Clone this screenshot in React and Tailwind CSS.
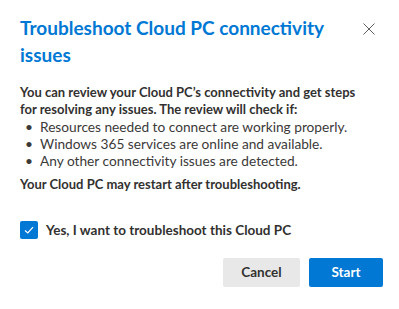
export default function App() {
  const font = { fontFamily: 'Lato, "Noto Sans", sans-serif' };
  return (
    <div className="w-[399px] h-[309px] bg-white relative overflow-hidden" style={font}>
      <div className="pl-5 pr-4 pt-[14px]">
        <div className="flex items-start justify-between">
          <h1 className="flex-1 pr-[20px] text-[19px] leading-[27px] font-bold text-[#0078d4]">
            Troubleshoot Cloud PC connectivity issues
          </h1>
          <button className="mt-[9px] mr-[8px] w-[12px] h-[12px] flex items-center justify-center">
            <svg width="12" height="12" viewBox="0 0 12 12">
              <path d="M0.5 0.5 L11.5 11.5 M11.5 0.5 L0.5 11.5" stroke="#605e5c" strokeWidth="1" fill="none" />
            </svg>
          </button>
        </div>
        <div className="mt-[16px] text-[13px] leading-[17px] text-[#323130] font-bold w-[350px]">
          You can review your Cloud PC’s connectivity and get steps for resolving any issues. The review will check if:
        </div>
        <ul className="text-[13.7px] leading-[17px] text-[#3b3a39]">
          <li className="flex items-start">
            <span className="w-[20px] pl-[5px]">•</span>
            <span>Resources needed to connect are working properly.</span>
          </li>
          <li className="flex items-start">
            <span className="w-[20px] pl-[5px]">•</span>
            <span>Windows 365 services are online and available.</span>
          </li>
          <li className="flex items-start">
            <span className="w-[20px] pl-[5px]">•</span>
            <span>Any other connectivity issues are detected.</span>
          </li>
        </ul>
        <div className="mt-[7px] text-[13px] leading-[17px] text-[#323130] font-bold">
          Your Cloud PC may restart after troubleshooting.
        </div>
        <label className="mt-[28px] flex items-center gap-[8px]">
          <span className="w-[18px] h-[18px] rounded-[2px] bg-[#0078d4] flex items-center justify-center">
            <svg width="12" height="12" viewBox="0 0 12 12">
              <path d="M2 6.5 L4.8 9 L10 3.2" stroke="#ffffff" strokeWidth="1.2" fill="none" />
            </svg>
          </span>
          <span className="text-[13.5px] leading-[18px] font-bold text-[#323130]">Yes, I want to troubleshoot this Cloud PC</span>
        </label>
        <div className="mt-[19px] flex justify-end gap-[9px]">
          <button className="w-[77px] h-[29px] rounded-[2px] bg-[#e8e8e8] text-[13.5px] font-bold text-[#323130]">
            Cancel
          </button>
          <button className="w-[74px] h-[29px] rounded-[2px] bg-[#0078d4] text-[13.5px] font-bold text-white">
            Start
          </button>
        </div>
      </div>
    </div>
  );
}
